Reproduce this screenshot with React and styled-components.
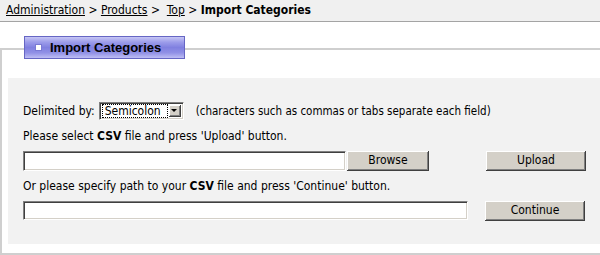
import React from "react";
import styled, { createGlobalStyle } from "styled-components";

const Global = createGlobalStyle`
  html, body { margin: 0; padding: 0; background: #ffffff; overflow: hidden; }
  body {
    font-family: "DejaVu Sans Condensed", "DejaVu Sans", sans-serif;
    font-stretch: condensed;
    font-size: 12px;
    color: #000;
  }
`;

const Page = styled.div`
  width: 600px;
  height: 255px;
  overflow: hidden;
`;

const Breadcrumb = styled.div`
  height: 21px;
  line-height: 21px;
  padding-left: 6px;
  background: #f0f0f0;
  border-bottom: 1px solid #a4a4a4;
  white-space: pre;
  font-size: 12px;
`;

const Crumb = styled.a`
  color: #000;
  text-decoration: underline;
`;

const Current = styled.b`
  font-weight: bold;
`;

const Tab = styled.div`
  position: relative;
  z-index: 1;
  margin: 14px 0 0 24px;
  width: 159px;
  height: 21px;
  border: 1px solid #6666c4;
  background: linear-gradient(
    to bottom,
    #c6c6f4 0%,
    #9c9cea 25%,
    #8080e0 50%,
    #9090e6 75%,
    #bebef4 100%
  );
  display: flex;
  align-items: center;
  box-sizing: content-box;
`;

const TabIcon = styled.span`
  width: 5px;
  height: 5px;
  margin-left: 10px;
  margin-right: 8px;
  background: #ffffff;
  border: 1px solid #7a7ad4;
`;

const TabTitle = styled.span`
  font-family: "Liberation Sans", Arial, sans-serif;
  font-stretch: normal;
  font-weight: bold;
  font-size: 13px;
  color: #000;
`;

const Panel = styled.div`
  margin-top: -11px;
  border: 2px solid #cfcfcf;
  border-right: none;
  padding: 28px 0 9px 6px;
  height: 166px;
  box-sizing: content-box;
`;

const Body = styled.div`
  background: #f2f2f2;
  height: 166px;
  padding: 20px 0 0 15px;
  box-sizing: border-box;
  display: flex;
  flex-direction: column;
`;

const Row = styled.div`
  height: 25px;
  display: flex;
  align-items: center;
  white-space: pre;
`;

const Label = styled.span`
  margin-right: ${(p) => p.gap || 0}px;
  font-size: ${(p) => p.size || 12}px;
`;

const SelectBox = styled.div`
  width: 85px;
  height: 18px;
  box-sizing: border-box;
  background: #fff;
  border-top: 1px solid #808080;
  border-left: 1px solid #808080;
  border-bottom: 1px solid #ffffff;
  border-right: 1px solid #ffffff;
  box-shadow: inset 1px 1px 0 #404040, inset -1px -1px 0 #d4d0c8;
  display: flex;
  align-items: center;
  padding: 2px;
  margin-right: 12px;
`;

const SelectValue = styled.span`
  flex: 1;
  height: 12px;
  line-height: 12px;
  padding-left: 2px;
  border: 1px dotted #000;
  font-size: 12px;
`;

const SelectArrow = styled.span`
  width: 12px;
  height: 12px;
  margin-left: 1px;
  background: #d4d0c8;
  box-sizing: border-box;
  box-shadow: inset -1px -1px 0 #404040, inset 1px 1px 0 #ffffff,
    inset -2px -2px 0 #808080;
  display: flex;
  align-items: center;
  justify-content: center;
  &::after {
    content: "";
    width: 0;
    height: 0;
    border-left: 3px solid transparent;
    border-right: 3px solid transparent;
    border-top: 3px solid #000;
    margin: 0 1px 1px 0;
  }
`;

const Field = styled.div`
  width: ${(p) => p.w}px;
  height: ${(p) => p.h || 20}px;
  box-sizing: border-box;
  background: #fff;
  border-top: 1px solid #808080;
  border-left: 1px solid #808080;
  border-bottom: 1px solid #ffffff;
  border-right: 1px solid #ffffff;
  box-shadow: inset 1px 1px 0 #404040, inset -1px -1px 0 #d4d0c8;
`;

const Button = styled.div`
  width: ${(p) => p.w}px;
  height: 20px;
  margin-left: ${(p) => p.ml || 0}px;
  box-sizing: border-box;
  background: #d4d0c8;
  box-shadow: inset -1px -1px 0 #404040, inset 1px 1px 0 #ffffff,
    inset -2px -2px 0 #808080;
  display: flex;
  align-items: center;
  justify-content: center;
  font-size: 12px;
  padding-bottom: 1px;
`;

export default function App() {
  return (
    <Page>
      <Global />
      <Breadcrumb>
        <Crumb>Administration</Crumb>
        {" > "}
        <Crumb>Products</Crumb>
        {" >  "}
        <Crumb>Top</Crumb>
        {" > "}
        <Current>Import Categories</Current>
      </Breadcrumb>
      <Tab>
        <TabIcon />
        <TabTitle>Import Categories</TabTitle>
      </Tab>
      <Panel>
        <Body>
          <Row>
            <Label gap={4}>Delimited by:</Label>
            <SelectBox>
              <SelectValue>Semicolon</SelectValue>
              <SelectArrow />
            </SelectBox>
            <Label size={11.5}>(characters such as commas or tabs separate each field)</Label>
          </Row>
          <Row>
            <span>
              Please select <b>CSV</b> file and press 'Upload' button.
            </span>
          </Row>
          <Row>
            <Field w={323} />
            <Button w={82} ml={1}>Browse</Button>
            <Button w={100} ml={57}>Upload</Button>
          </Row>
          <Row>
            <span>
              Or please specify path to your <b>CSV</b> file and press 'Continue' button.
            </span>
          </Row>
          <Row>
            <Field w={445} h={19} />
            <Button w={100} ml={17}>Continue</Button>
          </Row>
        </Body>
      </Panel>
    </Page>
  );
}
